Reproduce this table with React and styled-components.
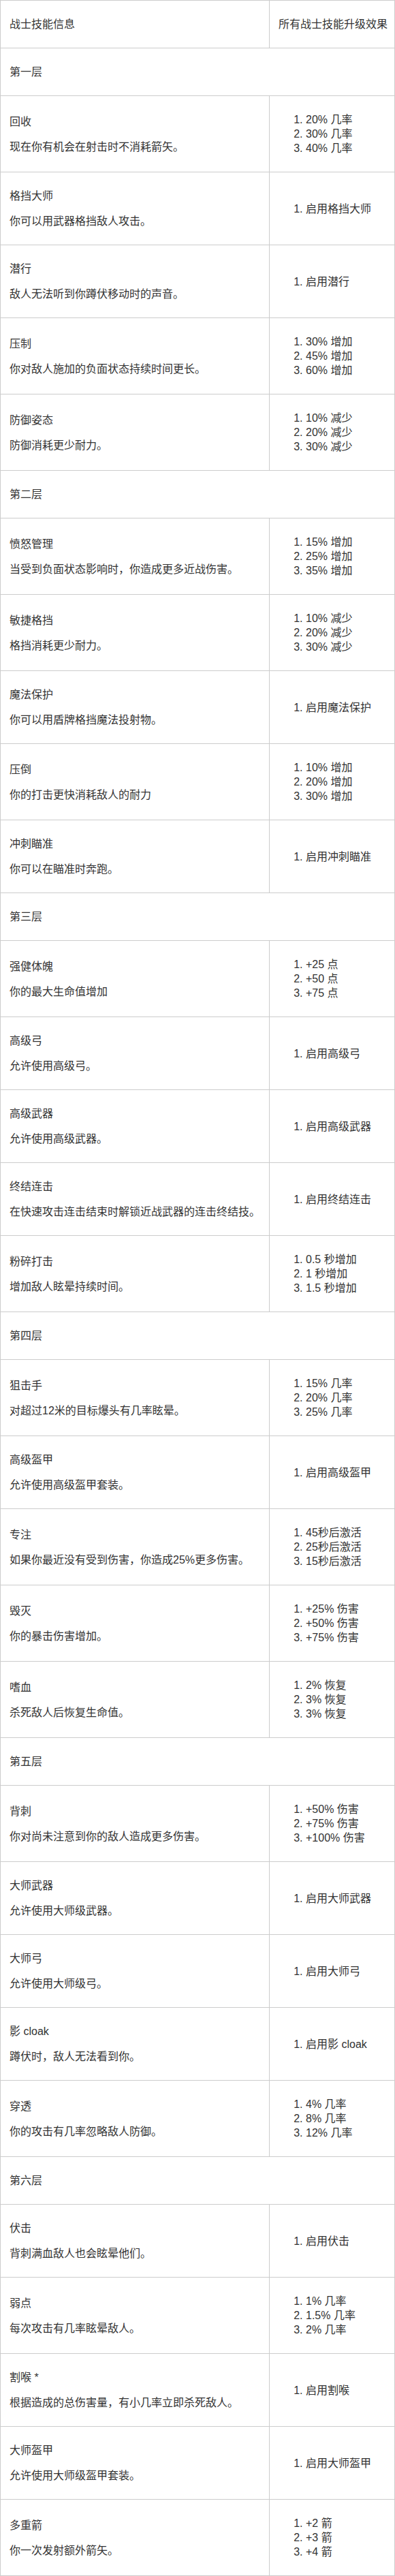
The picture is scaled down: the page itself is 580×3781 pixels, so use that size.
import React from 'react';
import styled, { createGlobalStyle } from 'styled-components';

const GlobalStyle = createGlobalStyle`
  html, body {
    margin: 0;
    padding: 0;
    background: #fff;
  }
  body {
    font-family: "Liberation Sans", "Noto Sans CJK SC", sans-serif;
    color: #333;
  }
`;

const TIERS = [
  {
    name: '第一层',
    skills: [
      { title: '回收', desc: '现在你有机会在射击时不消耗箭矢。', effects: ['20% 几率', '30% 几率', '40% 几率'] },
      { title: '格挡大师', desc: '你可以用武器格挡敌人攻击。', effects: ['启用格挡大师'] },
      { title: '潜行', desc: '敌人无法听到你蹲伏移动时的声音。', effects: ['启用潜行'] },
      { title: '压制', desc: '你对敌人施加的负面状态持续时间更长。', effects: ['30% 增加', '45% 增加', '60% 增加'] },
      { title: '防御姿态', desc: '防御消耗更少耐力。', effects: ['10% 减少', '20% 减少', '30% 减少'] },
    ],
  },
  {
    name: '第二层',
    skills: [
      { title: '愤怒管理', desc: '当受到负面状态影响时，你造成更多近战伤害。', effects: ['15% 增加', '25% 增加', '35% 增加'] },
      { title: '敏捷格挡', desc: '格挡消耗更少耐力。', effects: ['10% 减少', '20% 减少', '30% 减少'] },
      { title: '魔法保护', desc: '你可以用盾牌格挡魔法投射物。', effects: ['启用魔法保护'] },
      { title: '压倒', desc: '你的打击更快消耗敌人的耐力', effects: ['10% 增加', '20% 增加', '30% 增加'] },
      { title: '冲刺瞄准', desc: '你可以在瞄准时奔跑。', effects: ['启用冲刺瞄准'] },
    ],
  },
  {
    name: '第三层',
    skills: [
      { title: '强健体魄', desc: '你的最大生命值增加', effects: ['+25 点', '+50 点', '+75 点'] },
      { title: '高级弓', desc: '允许使用高级弓。', effects: ['启用高级弓'] },
      { title: '高级武器', desc: '允许使用高级武器。', effects: ['启用高级武器'] },
      { title: '终结连击', desc: '在快速攻击连击结束时解锁近战武器的连击终结技。', effects: ['启用终结连击'] },
      { title: '粉碎打击', desc: '增加敌人眩晕持续时间。', effects: ['0.5 秒增加', '1 秒增加', '1.5 秒增加'] },
    ],
  },
  {
    name: '第四层',
    skills: [
      { title: '狙击手', desc: '对超过12米的目标爆头有几率眩晕。', effects: ['15% 几率', '20% 几率', '25% 几率'] },
      { title: '高级盔甲', desc: '允许使用高级盔甲套装。', effects: ['启用高级盔甲'] },
      { title: '专注', desc: '如果你最近没有受到伤害，你造成25%更多伤害。', effects: ['45秒后激活', '25秒后激活', '15秒后激活'] },
      { title: '毁灭', desc: '你的暴击伤害增加。', effects: ['+25% 伤害', '+50% 伤害', '+75% 伤害'] },
      { title: '嗜血', desc: '杀死敌人后恢复生命值。', effects: ['2% 恢复', '3% 恢复', '3% 恢复'] },
    ],
  },
  {
    name: '第五层',
    skills: [
      { title: '背刺', desc: '你对尚未注意到你的敌人造成更多伤害。', effects: ['+50% 伤害', '+75% 伤害', '+100% 伤害'] },
      { title: '大师武器', desc: '允许使用大师级武器。', effects: ['启用大师武器'] },
      { title: '大师弓', desc: '允许使用大师级弓。', effects: ['启用大师弓'] },
      { title: '影 cloak', desc: '蹲伏时，敌人无法看到你。', effects: ['启用影 cloak'] },
      { title: '穿透', desc: '你的攻击有几率忽略敌人防御。', effects: ['4% 几率', '8% 几率', '12% 几率'] },
    ],
  },
  {
    name: '第六层',
    skills: [
      { title: '伏击', desc: '背刺满血敌人也会眩晕他们。', effects: ['启用伏击'] },
      { title: '弱点', desc: '每次攻击有几率眩晕敌人。', effects: ['1% 几率', '1.5% 几率', '2% 几率'] },
      { title: '割喉 *', desc: '根据造成的总伤害量，有小几率立即杀死敌人。', effects: ['启用割喉'] },
      { title: '大师盔甲', desc: '允许使用大师级盔甲套装。', effects: ['启用大师盔甲'] },
      { title: '多重箭', desc: '你一次发射额外箭矢。', effects: ['+2 箭', '+3 箭', '+4 箭'] },
    ],
  },
];

const Table = styled.table`
  width: 100%;
  table-layout: fixed;
  border-collapse: collapse;
  font-size: 16px;
  line-height: 21px;
`;

const InfoCol = styled.col`
  width: 395px;
`;

const Cell = styled.td`
  border: 1px solid #ccc;
  padding: 8px 13px;
  vertical-align: middle;
  text-align: left;
  white-space: nowrap;
`;

const HeadCell = styled(Cell).attrs({ as: 'th' })`
  font-weight: normal;
`;

const Text = styled.p`
  margin: 16px 0;
`;

const Effects = styled.ol`
  margin: 16px 0;
  padding-left: 40px;
`;

function SkillRow({ skill }) {
  return (
    <tr>
      <Cell>
        <Text>{skill.title}</Text>
        <Text>{skill.desc}</Text>
      </Cell>
      <Cell>
        <Effects>
          {skill.effects.map((e, i) => (
            <li key={i}>{e}</li>
          ))}
        </Effects>
      </Cell>
    </tr>
  );
}

export default function App() {
  return (
    <>
      <GlobalStyle />
      <Table>
        <colgroup>
          <InfoCol />
          <col />
        </colgroup>
        <thead>
          <tr>
            <HeadCell>
              <Text>战士技能信息</Text>
            </HeadCell>
            <HeadCell>
              <Text>所有战士技能升级效果</Text>
            </HeadCell>
          </tr>
        </thead>
        <tbody>
          {TIERS.map((tier) => (
            <React.Fragment key={tier.name}>
              <tr>
                <Cell colSpan={2}>
                  <Text>{tier.name}</Text>
                </Cell>
              </tr>
              {tier.skills.map((skill) => (
                <SkillRow key={skill.title} skill={skill} />
              ))}
            </React.Fragment>
          ))}
        </tbody>
      </Table>
    </>
  );
}
